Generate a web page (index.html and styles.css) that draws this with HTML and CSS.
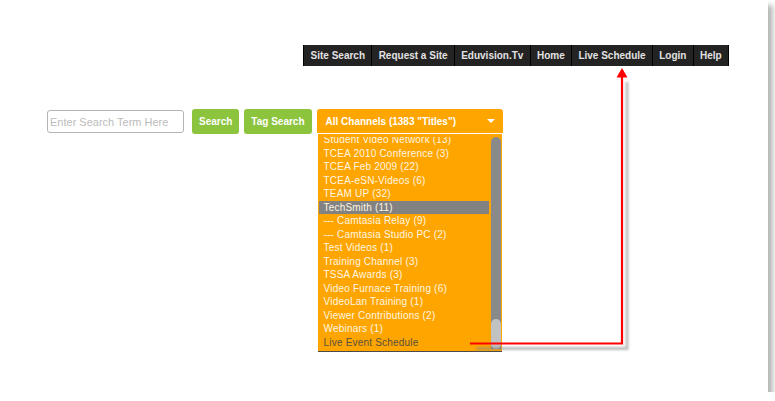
FILE: index.html
```html
<!DOCTYPE html>
<html lang="en">
<head>
  <meta charset="UTF-8">
  <meta name="viewport" content="width=device-width, initial-scale=1.0">
  <title>Live Schedule</title>
  <link rel="stylesheet" href="styles.css">
</head>

<body>
  <div class="frame">
    <!-- Top Menu -->
    <div class="topnav">
      <ul class="menu">
        <li><a href="#">Site Search</a></li>
        <li><a href="#">Request a Site</a></li>
        <li><a href="#">Eduvision.Tv</a></li>
        <li><a href="#">Home</a></li>
        <li><a href="#">Live Schedule</a></li>
        <li><a href="#">Login</a></li>
        <li><a href="#">Help</a></li>
      </ul>
    </div>

    <!-- Search Row -->
    <div class="search-row">
      <input class="search-input" type="text" placeholder="Enter Search Term Here">
      <button class="btn-green">Search</button>
      <button class="btn-green">Tag Search</button>

      <div class="channels">
        <div class="channels-head">
          <span>All Channels (1383 "Titles")</span>
          <span class="caret"></span>
        </div>
        <div class="channel-list">
          <div class="channel-view">
            <ul class="channel-items">
              <li>Student Video Network (13)</li>
              <li>TCEA 2010 Conference (3)</li>
              <li>TCEA Feb 2009 (22)</li>
              <li>TCEA-eSN-Videos (6)</li>
              <li>TEAM UP (32)</li>
              <li class="selected">TechSmith (11)</li>
              <li>--- Camtasia Relay (9)</li>
              <li>--- Camtasia Studio PC (2)</li>
              <li>Test Videos (1)</li>
              <li>Training Channel (3)</li>
              <li>TSSA Awards (3)</li>
              <li>Video Furnace Training (6)</li>
              <li>VideoLan Training (1)</li>
              <li>Viewer Contributions (2)</li>
              <li>Webinars (1)</li>
              <li class="live">Live Event Schedule</li>
            </ul>
          </div>
          <div class="scroll-track">
            <div class="scroll-thumb"></div>
          </div>
        </div>
      </div>
    </div>

    <!-- Callout Arrow -->
    <svg class="callout" width="768" height="392" viewBox="0 0 768 392">
      <defs>
        <filter id="soft" x="-10%" y="-10%" width="120%" height="120%">
          <feGaussianBlur stdDeviation="1.2"/>
        </filter>
      </defs>
      <g filter="url(#soft)" opacity="0.55">
        <polyline points="476,348.5 627,348.5 627,82" fill="none" stroke="#888" stroke-width="3"/>
      </g>
      <polyline points="470,343.5 622,343.5 622,76" fill="none" stroke="#f00" stroke-width="2.2"/>
      <polygon points="622,68 616.5,77.5 627.5,77.5" fill="#f00"/>
    </svg>
  </div>
</body>
</html>
```

FILE: styles.css
```css
body {
  margin: 0;
  padding: 0;
  background-color: #fff;
  font-family: 'Liberation Sans', Arial, sans-serif;
}

.frame {
  width: 768px;
  height: 392px;
  background: #fff;
  box-shadow: 5px 5px 5px rgba(0, 0, 0, 0.28);
  position: relative;
}

/* Top Menu */
.topnav {
  display: flex;
  justify-content: flex-end;
  padding: 45px 39px 0 0;
}

.menu {
  display: flex;
  margin: 0;
  padding: 0;
  list-style: none;
  background-color: #232323;
  border-right: 1px solid #000;
}

.menu li a {
  display: block;
  padding: 0 6.3px;
  line-height: 21px;
  border-left: 1px solid #000;
  color: #e2e2e2;
  font-size: 10px;
  font-weight: bold;
  text-decoration: none;
}

/* Search Row */
.search-row {
  display: flex;
  align-items: flex-start;
  margin-top: 43px;
  padding-left: 47px;
}

.search-input {
  box-sizing: border-box;
  width: 137px;
  height: 23px;
  margin: 1px 8px 0 0;
  padding: 0 2px;
  border: 1px solid #b4b4b4;
  border-radius: 3px;
  font-family: 'Liberation Sans', Arial, sans-serif;
  font-size: 11px;
}

.search-input::placeholder {
  color: #bcbcbc;
}

.btn-green {
  height: 25px;
  margin-right: 5px;
  padding: 0 7px;
  border: none;
  border-radius: 3px;
  background-color: #8cc43e;
  color: #fff;
  font-family: 'Liberation Sans', Arial, sans-serif;
  font-size: 10px;
  font-weight: bold;
  cursor: pointer;
}

/* Channel Dropdown */
.channels {
  width: 186px;
}

.channels-head {
  display: flex;
  justify-content: space-between;
  align-items: center;
  height: 24px;
  padding: 0 8px 0 9px;
  border-radius: 3px 3px 0 0;
  background-color: #ffa500;
  color: #fff;
  font-size: 10px;
  font-weight: bold;
}

.caret {
  width: 0;
  height: 0;
  border-left: 4px solid transparent;
  border-right: 4px solid transparent;
  border-top: 4px solid #fff;
}

.channel-list {
  box-sizing: border-box;
  display: flex;
  gap: 2px;
  width: 184px;
  height: 219px;
  margin-left: 1px;
  padding: 3px 1px 2px 1px;
  border-top: 1px solid #fff;
  border-bottom: 1px solid #4a4a4a;
  background-color: #ffa500;
}

.channel-view {
  width: 170px;
  overflow: hidden;
}

.channel-items {
  margin: -4px 0 0;
  padding: 0;
  list-style: none;
}

.channel-items li {
  padding-left: 5px;
  line-height: 13.5px;
  color: #fff6e2;
  font-size: 10px;
  letter-spacing: 0.2px;
  white-space: nowrap;
}

.channel-items li.selected {
  background-color: #828282;
}

.channel-items li.live {
  color: #58503f;
}

.scroll-track {
  display: flex;
  flex-direction: column;
  justify-content: flex-end;
  width: 10px;
  border-radius: 5px 5px 0 0;
  background-color: #8a8a8a;
}

.scroll-thumb {
  height: 30px;
  border-radius: 5px;
  background-color: #c2c2c2;
}

/* Callout Arrow */
.callout {
  position: absolute;
  top: 0;
  left: 0;
  pointer-events: none;
}
```
